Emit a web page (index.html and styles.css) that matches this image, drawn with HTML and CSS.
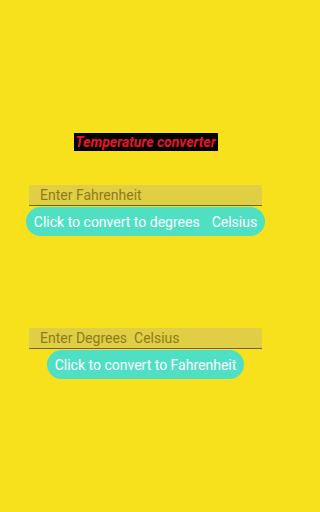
FILE: index.html
```html
<!DOCTYPE html>
<html>
<head>
<meta charset="utf-8">
<link rel="stylesheet" href="styles.css">
</head>
<body>
<div class="screen">
  <div class="title-row"><span class="title">Temperature converter</span></div>
  <div class="group group-one">
    <div class="field">Enter Fahrenheit</div>
    <div class="btn btn-wide">Click to convert to degrees<span class="gap"></span>Celsius</div>
  </div>
  <div class="group group-two">
    <div class="field">Enter Degrees  Celsius</div>
    <div class="btn btn-narrow">Click to convert to Fahrenheit</div>
  </div>
</div>
</body>
</html>
```
FILE: styles.css
```css
html, body {
  margin: 0;
  padding: 0;
  background: #f7e11d;
}
.screen {
  width: 283px;
  height: 512px;
  box-sizing: border-box;
  padding: 133px 0 0 8px;
  display: flex;
  flex-direction: column;
  align-items: center;
  font-family: Roboto, "Liberation Sans", sans-serif;
}
.title-row {
  display: flex;
  justify-content: center;
}
.title {
  display: block;
  background: #000;
  color: #e8142c;
  font-weight: bold;
  font-style: italic;
  font-size: 14px;
  line-height: 18px;
  height: 18px;
  width: 144px;
  text-align: center;
  white-space: nowrap;
}
.group {
  display: flex;
  flex-direction: column;
  align-items: center;
}
.group-one { margin-top: 34px; }
.group-two { margin-top: 92px; }
.field {
  width: 233px;
  height: 21px;
  box-sizing: border-box;
  background: #e0cf45;
  border-bottom: 1.5px solid #6f6317;
  color: #8c7c1c;
  font-size: 14px;
  line-height: 21px;
  padding-left: 11px;
  border-radius: 2px 2px 0 0;
  white-space: pre;
}
.btn {
  margin-top: 1px;
  height: 29px;
  border-radius: 15px;
  background: #4fe0c4;
  color: #ffffff;
  font-size: 14px;
  line-height: 30px;
  text-align: center;
  white-space: pre;
}
.gap {
  display: inline-block;
  width: 12px;
}
.btn-wide { width: 239px; }
.btn-narrow { width: 197px; }
```
